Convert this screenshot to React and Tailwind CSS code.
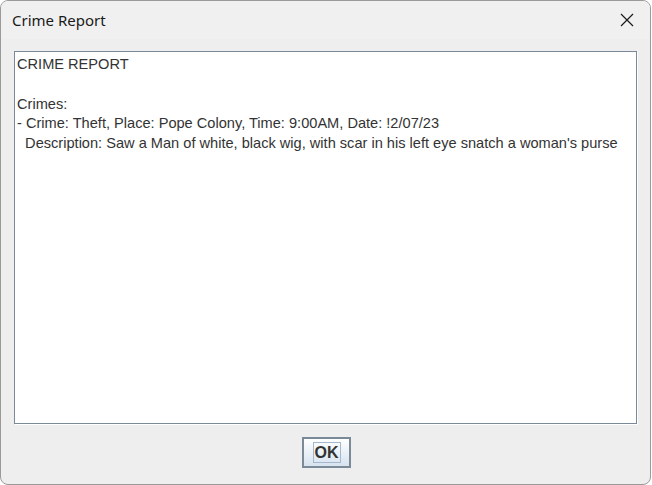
export default function App() {
  const font = { fontFamily: '"Liberation Sans", Arial, sans-serif' };
  return (
    <div className="w-[652px] h-[485px] bg-white" style={font}>
      <div className="w-[651px] h-[485px] flex flex-col border border-[#9a9a9a] rounded-[8px] overflow-hidden bg-[#eeeeee]">
        <div className="h-[38px] shrink-0 bg-[#f0f0f0] flex items-center justify-between pl-[11px] pr-[14px]">
          <span className="text-[15px] text-[#1a1a1a]" style={{ fontFamily: '"Noto Sans", "Liberation Sans", sans-serif', fontSize: '15px' }}>Crime Report</span>
          <svg width="14" height="14" viewBox="0 0 14 14" className="mr-[2px]">
            <path d="M1 1L13 13M13 1L1 13" stroke="#1a1a1a" strokeWidth="1.2" />
          </svg>
        </div>
        <div className="flex-1 flex flex-col pt-[12px] px-[13px]">
          <div className="h-[373px] border border-[#7a8a99] bg-white shadow-[1px_1px_0_#ffffff] pl-[2px] pt-[3px] text-[14.6px] leading-[19.8px] text-[#333333] whitespace-pre">
{`CRIME REPORT

Crimes:
- Crime: Theft, Place: Pope Colony, Time: 9:00AM, Date: !2/07/23
  Description: Saw a Man of white, black wig, with scar in his left eye snatch a woman's purse`}
          </div>
          <div className="flex justify-center mt-[13px] pl-[2px]">
            <button className="w-[49px] h-[31px] border-2 border-[#7a8a99] bg-gradient-to-b from-white to-[#d7e3f0] flex items-center justify-center p-0">
              <span className="border border-[#a3b8cc] px-[1px] h-[21px] flex items-center text-[16px] font-bold text-[#333333]">OK</span>
            </button>
          </div>
        </div>
      </div>
    </div>
  );
}
